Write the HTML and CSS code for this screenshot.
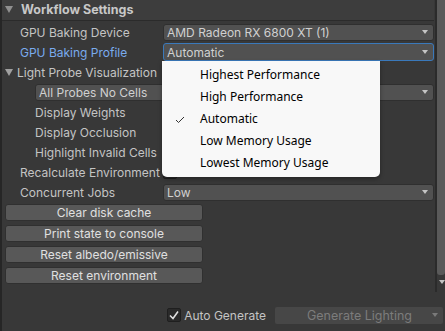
FILE: index.html
```html
<!DOCTYPE html>
<html>
<head>
<meta charset="utf-8">
<link rel="stylesheet" href="styles.css">
</head>
<body>
<div class="app">
  <div class="main">
    <div class="content">
      <div class="header"><span class="fold"></span><span class="header-title">Workflow Settings</span></div>
      <div class="rows">
        <div class="row"><span class="label">GPU Baking Device</span><div class="dropdown"><span>AMD Radeon RX 6800 XT (1)</span><span class="arrow"></span></div></div>
        <div class="row"><span class="label focused">GPU Baking Profile</span><div class="dropdown focus"><span>Automatic</span><span class="arrow"></span></div></div>
        <div class="row sub-head"><span class="fold"></span><span class="label">Light Probe Visualization</span></div>
        <div class="row indent"><div class="dropdown wide"><span>All Probes No Cells</span><span class="arrow"></span></div></div>
        <div class="row indent"><span class="label">Display Weights</span></div>
        <div class="row indent"><span class="label">Display Occlusion</span></div>
        <div class="row indent"><span class="label">Highlight Invalid Cells</span></div>
        <div class="row"><span class="label">Recalculate Environment</span><span class="checkbox"></span></div>
        <div class="row"><span class="label">Concurrent Jobs</span><div class="dropdown"><span>Low</span><span class="arrow"></span></div></div>
      </div>
      <div class="buttons">
        <div class="button">Clear disk cache</div>
        <div class="button">Print state to console</div>
        <div class="button">Reset albedo/emissive</div>
        <div class="button">Reset environment</div>
      </div>
    </div>
    <div class="scrollbar"><div class="thumb"></div><div class="sb-arrow"></div></div>
  </div>
  <div class="footer">
    <span class="checkbox checked"><svg width="14" height="14" viewBox="0 0 14 14"><polyline points="3,7.5 6,10.5 11,3.5" fill="none" stroke="#e0e0e0" stroke-width="1.6"/></svg></span>
    <span class="auto-label">Auto Generate</span>
    <div class="gen-button"><span class="gen-text">Generate Lighting</span><span class="arrow dim"></span></div>
  </div>
  <div class="menu">
    <div class="item">Highest Performance</div>
    <div class="item">High Performance</div>
    <div class="item"><svg class="check" width="10" height="8" viewBox="0 0 10 8"><polyline points="1,4 3.5,6.5 9,1" fill="none" stroke="#333" stroke-width="1"/></svg>Automatic</div>
    <div class="item">Low Memory Usage</div>
    <div class="item">Lowest Memory Usage</div>
  </div>
</div>
</body>
</html>
```
FILE: styles.css
```css
* { box-sizing: border-box; }
html, body { margin: 0; padding: 0; }
body {
  width: 445px;
  height: 331px;
  background: #383838;
  font-family: Inter, "Noto Sans", sans-serif;
  font-size: 12px;
  color: #c4c4c4;
  overflow: hidden;
}
.app {
  position: relative;
  width: 445px;
  height: 331px;
  border-left: 2px solid #262626;
}
.main {
  display: flex;
  height: 292px;
}
.content {
  flex: 1;
  padding-right: 1px;
}
.header {
  height: 21px;
  display: flex;
  align-items: center;
  background: #3d3d3d;
  border-bottom: 1px solid #2b2b2b;
  padding-left: 3px;
  padding-bottom: 2px;
}
.header-title {
  font-weight: 700;
  font-size: 12.5px;
  color: #c8c8c8;
  margin-left: 8px;
}
.fold {
  width: 0;
  height: 0;
  border-left: 4px solid transparent;
  border-right: 4px solid transparent;
  border-top: 7px solid #8f8f8f;
}
.rows {
  padding-top: 1px;
}
.row {
  height: 20px;
  display: flex;
  align-items: center;
  padding-left: 18px;
}
.row.indent { padding-left: 33px; }
.row.sub-head { padding-left: 3px; }
.row.sub-head .fold { border-top-color: #a0a0a0; margin-right: 4px; }
.label {
  width: 143px;
  flex: none;
  white-space: nowrap;
}
.sub-head .label { width: auto; }
.label.focused { color: #7aabee; }
.dropdown {
  flex: 1;
  height: 17px;
  background: #515151;
  border: 1px solid #2f2f2f;
  border-radius: 3px;
  display: flex;
  align-items: center;
  justify-content: space-between;
  padding: 0 5px 0 3px;
  color: #d0d0d0;
}
.dropdown.focus { border-color: #3a79bb; height: 18px; }
.arrow {
  width: 0;
  height: 0;
  border-left: 3.5px solid transparent;
  border-right: 3.5px solid transparent;
  border-top: 4px solid #c4c4c4;
}
.arrow.dim { border-top-color: #7a7a7a; }
.checkbox {
  width: 14px;
  height: 14px;
  background: #2a2a2a;
  border: 1px solid #1f1f1f;
  border-radius: 2px;
  flex: none;
}
.buttons {
  padding: 2px 0 0 3px;
  display: flex;
  flex-direction: column;
  gap: 4px;
}
.button {
  width: 198px;
  height: 17px;
  background: #585858;
  border: 1px solid #303030;
  border-radius: 3px;
  color: #e0e0e0;
  text-align: center;
  line-height: 15px;
}
.scrollbar {
  width: 10px;
  border-left: 2px solid #2b2b2b;
  position: relative;
}
.thumb {
  height: 275px;
  background: #5a5a5a;
  border-radius: 0 0 3px 3px;
}
.sb-arrow {
  margin: 5px 0 0 2px;
  width: 0;
  height: 0;
  border-left: 3.5px solid transparent;
  border-right: 3.5px solid transparent;
  border-top: 4px solid #c4c4c4;
}
.footer {
  height: 39px;
  display: flex;
  justify-content: flex-end;
  align-items: center;
  padding-top: 7px;
  padding-right: 2px;
}
.checkbox.checked {
  display: flex;
  align-items: center;
  justify-content: center;
  margin-right: 3px;
}
.checkbox.checked svg { margin: -1px; }
.auto-label { color: #c4c4c4; margin-right: 9px; }
.gen-button {
  width: 168px;
  height: 17px;
  background: #474747;
  border-radius: 2px;
  display: flex;
  align-items: center;
  padding: 0 5px 0 0;
  color: #7c7c7c;
}
.gen-text { flex: 1; text-align: center; padding-left: 12px; font-size: 12.5px; }
.menu {
  position: absolute;
  left: 160px;
  top: 61px;
  width: 218px;
  height: 116px;
  background: #f8f8f8;
  border-radius: 0 0 5px 5px;
  box-shadow: 0 2px 4px rgba(0,0,0,0.35);
  padding-top: 3px;
  font-family: "Noto Sans", "Open Sans", sans-serif;
  font-size: 12px;
  color: #000;
}
.item {
  height: 22px;
  line-height: 22px;
  padding-left: 38px;
  position: relative;
}
.check {
  position: absolute;
  left: 13px;
  top: 8px;
}
```
